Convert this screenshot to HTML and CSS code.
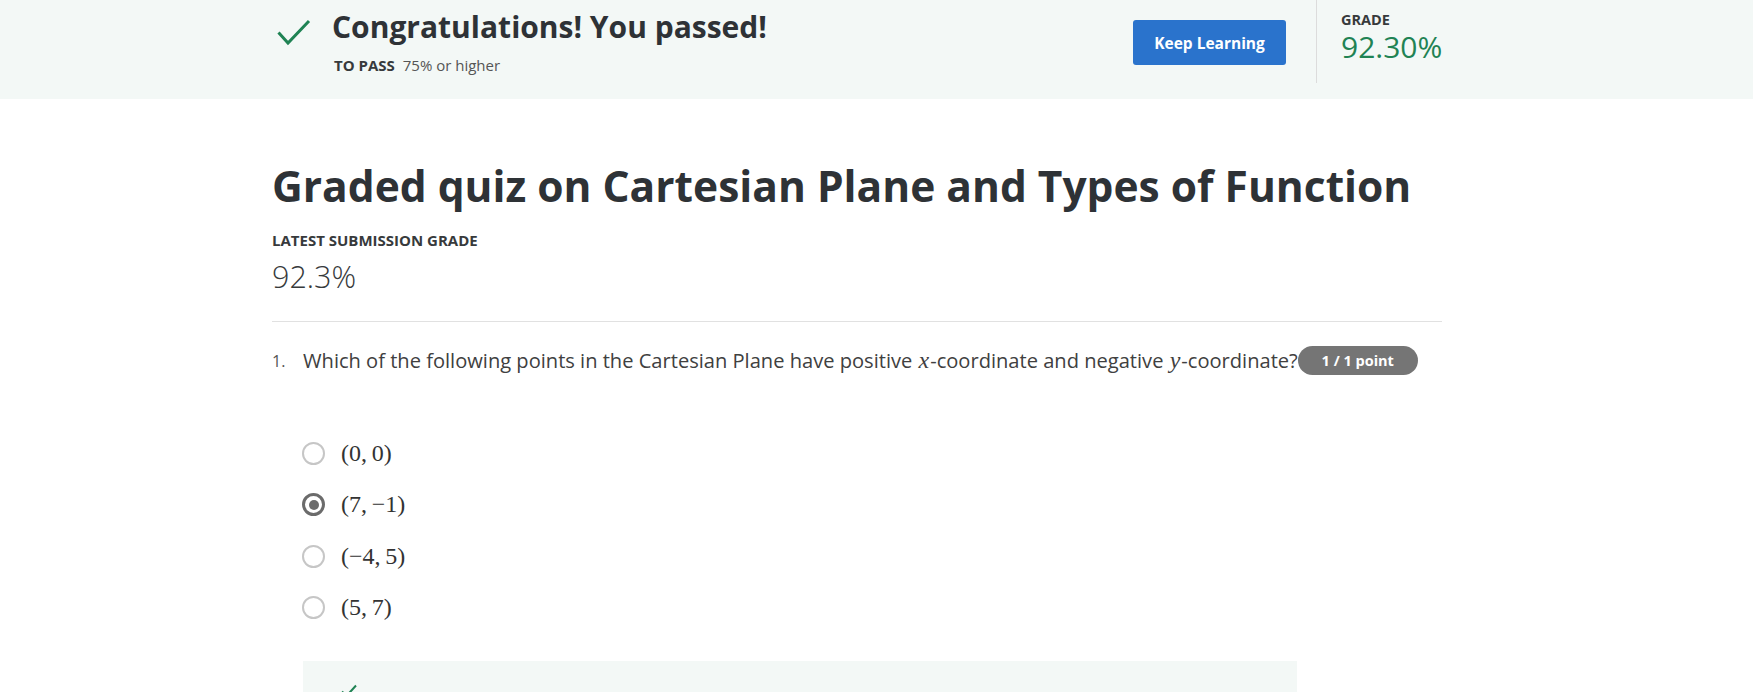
FILE: index.html
```html
<!DOCTYPE html>
<html lang="en">
<head>
<meta charset="utf-8">
<title>Graded quiz on Cartesian Plane and Types of Function</title>
<link rel="stylesheet" href="styles.css">
</head>
<body>
<header class="topbar">
  <div class="topbar-inner">
    <svg class="pass-check" width="34" height="28" viewBox="0 0 34 28" aria-hidden="true">
      <path d="M1.5 13.5 L11 24 L32 2" fill="none" stroke="#1f8354" stroke-width="3"/>
    </svg>
    <div class="pass-text">
      <div class="pass-title">Congratulations! You passed!</div>
      <div class="pass-sub"><span class="pass-label">TO PASS</span> 75% or higher</div>
    </div>
    <div class="spacer"></div>
    <button class="keep-btn">Keep Learning</button>
    <div class="grade-box">
      <div class="grade-label">GRADE</div>
      <div class="grade-value">92.30%</div>
    </div>
  </div>
</header>

<main class="content">
  <h1 class="quiz-title">Graded quiz on Cartesian Plane and Types of Function</h1>
  <div class="latest-label">LATEST SUBMISSION GRADE</div>
  <div class="latest-value">92.3%</div>
  <hr class="sep">

  <div class="question">
    <span class="q-num">1.</span>
    <span class="q-text">Which of the following points in the Cartesian Plane have positive <i class="math">x</i>-coordinate and negative <i class="math">y</i>-coordinate?</span><span class="badge">1 / 1 point</span>
  </div>

  <ul class="options">
    <li class="option"><span class="radio"></span><span class="opt-math">(0,&#8201;0)</span></li>
    <li class="option"><span class="radio checked"></span><span class="opt-math">(7,&#8201;&#8722;1)</span></li>
    <li class="option"><span class="radio"></span><span class="opt-math">(&#8722;4,&#8201;5)</span></li>
    <li class="option"><span class="radio"></span><span class="opt-math">(5,&#8201;7)</span></li>
  </ul>

  <div class="feedback">
    <svg class="fb-check" width="16" height="14" viewBox="0 0 16 14" aria-hidden="true">
      <path d="M1 7.5 L5.5 12 L15 1.5" fill="none" stroke="#1f8354" stroke-width="2"/>
    </svg>
    <span class="fb-text">Correct</span>
  </div>
</main>
</body>
</html>
```

FILE: styles.css
```css
* { box-sizing: border-box; }

html, body {
  margin: 0;
  padding: 0;
  background: #ffffff;
  font-family: "Open Sans", "Noto Sans", "Liberation Sans", sans-serif;
  color: #373a3c;
  overflow: hidden;
}

.topbar {
  background: #f3f8f6;
  height: 99px;
}

.topbar-inner {
  margin-left: 272px;
  width: 1170px;
  display: flex;
  align-items: flex-start;
}

.pass-check {
  margin: 19px 0 0 5px;
  flex: none;
}

.pass-text {
  margin-left: 21px;
  padding-top: 8px;
}

.pass-title {
  font-size: 30px;
  font-weight: 700;
  line-height: 38px;
  color: #2e3236;
}

.pass-sub {
  margin-top: 9px;
  margin-left: 2px;
  font-size: 15px;
  line-height: 20px;
  color: #555;
}

.pass-label {
  font-weight: 700;
  color: #373a3c;
  margin-right: 4px;
}

.spacer { flex: 1; }

.keep-btn {
  margin-top: 20px;
  width: 153px;
  height: 45px;
  border: none;
  border-radius: 3px;
  background: #2a73cc;
  color: #ffffff;
  font-family: "Open Sans", "Noto Sans", sans-serif;
  font-size: 15.5px;
  font-weight: 700;
  padding: 0;
}

.grade-box {
  margin-left: 30px;
  width: 126px;
  height: 83px;
  border-left: 1px solid #dcdcdc;
  padding-left: 24px;
  padding-top: 10px;
}

.grade-label {
  font-size: 14.5px;
  font-weight: 700;
  line-height: 20px;
  color: #373a3c;
}

.grade-value {
  font-size: 30px;
  font-weight: 400;
  line-height: 36px;
  color: #1f8354;
  margin-top: -1px;
}

.content {
  margin-left: 272px;
  width: 1170px;
}

.quiz-title {
  margin: 61px 0 0 0;
  font-size: 42.5px;
  font-weight: 700;
  line-height: 52px;
  color: #2e3236;
}

.latest-label {
  margin-top: 18px;
  font-size: 15px;
  font-weight: 700;
  line-height: 20px;
  color: #373a3c;
}

.latest-value {
  margin-top: 8px;
  font-size: 30.5px;
  font-weight: 300;
  line-height: 36px;
  color: #373a3c;
}

.sep {
  margin: 27px 0 0 0;
  border: none;
  border-top: 1px solid #e1e1e1;
  height: 0;
}

.question {
  margin-top: 23px;
  display: flex;
  align-items: center;
  line-height: 30px;
}

.q-num {
  width: 31px;
  flex: none;
  font-size: 16px;
  color: #555;
}

.q-text {
  font-size: 20.1px;
  color: #404040;
}

.math {
  font-family: "Liberation Serif", "DejaVu Serif", serif;
  font-style: italic;
  font-size: 24px;
  padding: 0 1px;
}

.badge {
  flex: none;
  height: 29px;
  width: 120px;
  border-radius: 15px;
  background: #757575;
  color: #ffffff;
  font-size: 14.5px;
  font-weight: 700;
  display: flex;
  align-items: center;
  justify-content: center;
}

.options {
  list-style: none;
  margin: 52px 0 0 0;
  padding: 0 0 0 30px;
}

.option {
  display: flex;
  align-items: center;
  height: 51.3px;
}

.radio {
  width: 23px;
  height: 23px;
  border: 2px solid #c6c6c6;
  border-radius: 50%;
  flex: none;
  display: flex;
  align-items: center;
  justify-content: center;
}

.radio.checked {
  border: 3px solid #6b6b6b;
}

.radio.checked::after {
  content: "";
  width: 10px;
  height: 10px;
  border-radius: 50%;
  background: #6b6b6b;
}

.opt-math {
  margin-left: 16px;
  font-family: "Liberation Serif", "DejaVu Serif", serif;
  font-size: 24px;
  color: #333;
}

.feedback {
  margin-top: 28px;
  margin-left: 31px;
  width: 994px;
  height: 80px;
  background: #f3f8f6;
  display: flex;
  align-items: flex-start;
  padding: 23px 0 0 38px;
}

.fb-check { flex: none; }

.fb-text {
  margin-left: 14px;
  font-size: 16px;
  font-weight: 700;
  line-height: 20px;
  margin-top: 4px;
  color: #373a3c;
}
```
